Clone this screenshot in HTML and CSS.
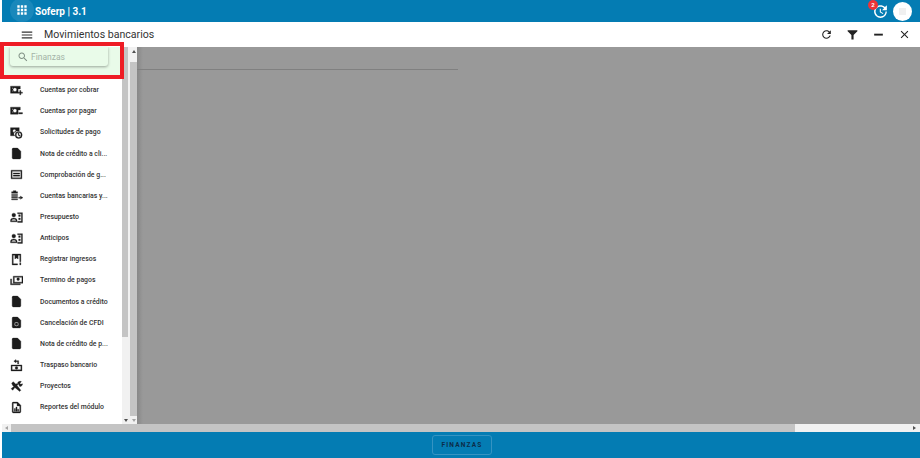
FILE: index.html
```html
<!DOCTYPE html>
<html lang="es">
<head>
    <meta charset="UTF-8">
    <meta name="viewport" content="width=device-width, initial-scale=1.0">
    <title>Soferp | 3.1</title>
    <link rel="stylesheet" href="styles.css">
</head>
<body>

<svg class="sprite" width="0" height="0">
    <symbol id="i-doc" viewBox="0 0 24 24"><path d="M6 2h8l6 6v12c0 1.100-.9 2-2 2H6c-1.100 0-2-.9-2-2V4c0-1.100.9-2 2-2z"/></symbol>
    <symbol id="i-cobrar" viewBox="0 0 24 24"><path fill-rule="evenodd" d="M1 4h18v5h-4v8H1zM9 7a3.500 3.500 0 1 0 0 7 3.500 3.500 0 0 0 0-7zM4 7v2h1.500V7zM4 12v2h1.500v-2z"/><path d="M18 12h2v3h3v2h-3v3h-2v-3h-3v-2h3z"/></symbol>
    <symbol id="i-pagar" viewBox="0 0 24 24"><path fill-rule="evenodd" d="M1 4h18v5h-4v8H1zM9 7a3.500 3.500 0 1 0 0 7 3.500 3.500 0 0 0 0-7zM4 7v2h1.500V7zM4 12v2h1.500v-2z"/><path d="M16 14h7v2.500h-7z"/></symbol>
    <symbol id="i-solicitud" viewBox="0 0 24 24"><path fill-rule="evenodd" d="M1 3h16v6h-5a5 5 0 0 0-3 9H1zM8 6a3 3 0 1 0 0 6 3 3 0 0 0 0-6z"/><path fill-rule="evenodd" d="M16 10a6.500 6.500 0 1 1 0 13 6.500 6.500 0 0 1 0-13zm0 2a4.500 4.500 0 1 0 0 9 4.500 4.500 0 0 0 0-9zm-1 1h1.500v3l2.500 1.500-.8 1.200L15 17z"/></symbol>
    <symbol id="i-comprobacion" viewBox="0 0 24 24"><path fill-rule="evenodd" d="M2 4h20v16H2zm2 2v12h16V6zM6 9h12v2H6zM6 13h12v2H6z"/></symbol>
    <symbol id="i-bancos" viewBox="0 0 24 24"><path d="M6 3h5v2h3v3H3V5h3zM3 10h11v2H3zM3 14h11v2H3zM3 18h11v2H3zM16 15h4l-1-2 5 3-5 3 1-2h-4z"/></symbol>
    <symbol id="i-personas" viewBox="0 0 24 24"><path fill-rule="evenodd" d="M7 4a3.500 3.500 0 1 1 0 7 3.500 3.500 0 0 1 0-7zM1 20v-3c0-2.500 3-4 6-4s6 1.500 6 4v3zm2-2h8v-1c0-1-2-2-4-2s-4 1-4 2zM14 3h9v18h-9v-2h7V5h-7z"/><path d="M16 7h3v3h-3zM16 13h3v3h-3z"/></symbol>
    <symbol id="i-ingresos" viewBox="0 0 24 24"><path fill-rule="evenodd" d="M4 2h16v14h-2V4h-3v7l-3-2-3 2V4H6v16h8v2H4zM18 18h2v4h-2z"/></symbol>
    <symbol id="i-termino" viewBox="0 0 24 24"><path fill-rule="evenodd" d="M6 4h18v13H6zm2 2v9h14V6zm7 1a2.500 2.500 0 1 1 0 5 2.500 2.500 0 0 1 0-5zM1 9h2v9h16v2H1z"/></symbol>
    <symbol id="i-cancelar" viewBox="0 0 24 24"><path fill-rule="evenodd" d="M6 2h8l6 6v12c0 1.100-.9 2-2 2H6c-1.100 0-2-.9-2-2V4c0-1.100.9-2 2-2zm6 9a4 4 0 1 0 0 8 4 4 0 0 0 0-8zm0 1.500a2.500 2.500 0 1 1 0 5 2.500 2.500 0 0 1 0-5z"/></symbol>
    <symbol id="i-traspaso" viewBox="0 0 24 24"><path fill-rule="evenodd" d="M2 11h20v11H2zm2 2v7h16v-7zm8 1a2.500 2.500 0 1 1 0 5 2.500 2.500 0 0 1 0-5z"/><path d="M11 1l-4 3 4 3V5h3v4h2V3h-5z"/></symbol>
    <symbol id="i-tools" viewBox="0 0 24 24"><path d="M3 6l3-3 5 5 2-2 2 2-2 2 7 9-2 2-9-7-4 5-3-3 5-4-2-2zM14 5c2-2.500 5-3 7-2l-3 3 2 2 3-1c.5 2.500-2 5.500-5 5z"/></symbol>
    <symbol id="i-reporte" viewBox="0 0 24 24"><path fill-rule="evenodd" d="M6 2h8l6 6v12c0 1.100-.9 2-2 2H6c-1.100 0-2-.9-2-2V4c0-1.100.9-2 2-2zm0 2v16h12V9h-5V4zM8 14h2v5H8zM11 11h2v8h-2zM14 15h2v4h-2z"/></symbol>
</svg>

<header class="topbar">
    <div class="topbar-left">
        <button class="apps-btn">
            <svg class="icon-apps" viewBox="0 0 24 24"><path d="M4 8h4V4H4v4zm6 12h4v-4h-4v4zm-6 0h4v-4H4v4zm0-6h4v-4H4v4zm6 0h4v-4h-4v4zm6-10v4h4V4h-4zm-6 4h4V4h-4v4zm6 6h4v-4h-4v4zm0 6h4v-4h-4v4z"/></svg>
        </button>
        <span class="brand">Soferp | 3.1</span>
    </div>
    <div class="topbar-right">
        <div class="history">
            <svg class="icon-history" viewBox="0 0 24 24"><path d="M21 10.120h-6.780l2.740-2.820c-2.730-2.700-7.150-2.800-9.880-.1-2.730 2.710-2.730 7.080 0 9.790s7.150 2.710 9.880 0C18.320 15.650 19 14.080 19 12.100h2c0 1.980-.88 4.550-2.640 6.290-3.510 3.480-9.210 3.480-12.720 0-3.500-3.470-3.530-9.110-.02-12.580s9.140-3.470 12.650 0L21 3v7.120zM12.500 8v4.250l3.500 2.080-.72 1.210L11 13V8h1.500z"/></svg>
            <span class="badge">2</span>
        </div>
        <div class="avatar"><span class="avatar-inner"></span></div>
    </div>
</header>

<div class="toolbar">
    <div class="toolbar-left">
        <svg class="icon-menu" viewBox="0 0 24 24"><path d="M3 18h18v-2H3v2zm0-5h18v-2H3v2zm0-7v2h18V6H3z"/></svg>
        <span class="page-title">Movimientos bancarios</span>
    </div>
    <div class="toolbar-actions">
        <svg class="tool" viewBox="0 0 24 24"><path d="M17.650 6.350C16.200 4.900 14.210 4 12 4c-4.420 0-7.990 3.580-7.990 8s3.570 8 7.990 8c3.730 0 6.840-2.550 7.730-6h-2.080c-.82 2.330-3.040 4-5.650 4-3.310 0-6-2.690-6-6s2.690-6 6-6c1.660 0 3.140.69 4.220 1.780L13 11h7V4l-2.350 2.350z"/></svg>
        <svg class="tool" viewBox="0 0 24 24"><path d="M3 4h18v2l-7 7v8h-4v-8L3 6z"/></svg>
        <svg class="tool" viewBox="0 0 24 24"><path d="M4 10.500h16v3.500H4z"/></svg>
        <svg class="tool" viewBox="0 0 24 24"><path d="M19 6.410 17.590 5 12 10.590 6.410 5 5 6.410 10.590 12 5 17.590 6.410 19 12 13.410 17.590 19 19 17.590 13.410 12z"/></svg>
    </div>
</div>

<div class="workspace">
    <aside class="sidebar">
        <div class="search-area">
            <div class="search-box">
                <svg class="icon-search" viewBox="0 0 24 24"><path d="M15.500 14h-.79l-.28-.27C15.410 12.590 16 11.110 16 9.500 16 5.910 13.090 3 9.500 3S3 5.910 3 9.500 5.910 16 9.500 16c1.610 0 3.090-.59 4.230-1.570l.27.28v.79l5 4.990L20.490 19l-4.990-5zm-6 0C7.010 14 5 11.990 5 9.500S7.010 5 9.500 5 14 7.010 14 9.500 11.990 14 9.500 14z"/></svg>
                <span class="search-text">Finanzas</span>
            </div>
        </div>
        <ul class="menu">
            <li><svg class="menu-icon"><use href="#i-cobrar"/></svg><span>Cuentas por cobrar</span></li>
            <li><svg class="menu-icon"><use href="#i-pagar"/></svg><span>Cuentas por pagar</span></li>
            <li><svg class="menu-icon"><use href="#i-solicitud"/></svg><span>Solicitudes de pago</span></li>
            <li><svg class="menu-icon"><use href="#i-doc"/></svg><span>Nota de crédito a cli...</span></li>
            <li><svg class="menu-icon"><use href="#i-comprobacion"/></svg><span>Comprobación de g...</span></li>
            <li><svg class="menu-icon"><use href="#i-bancos"/></svg><span>Cuentas bancarias y...</span></li>
            <li><svg class="menu-icon"><use href="#i-personas"/></svg><span>Presupuesto</span></li>
            <li><svg class="menu-icon"><use href="#i-personas"/></svg><span>Anticipos</span></li>
            <li><svg class="menu-icon"><use href="#i-ingresos"/></svg><span>Registrar ingresos</span></li>
            <li><svg class="menu-icon"><use href="#i-termino"/></svg><span>Termino de pagos</span></li>
            <li><svg class="menu-icon"><use href="#i-doc"/></svg><span>Documentos a crédito</span></li>
            <li><svg class="menu-icon"><use href="#i-cancelar"/></svg><span>Cancelación de CFDI</span></li>
            <li><svg class="menu-icon"><use href="#i-doc"/></svg><span>Nota de crédito de p...</span></li>
            <li><svg class="menu-icon"><use href="#i-traspaso"/></svg><span>Traspaso bancario</span></li>
            <li><svg class="menu-icon"><use href="#i-tools"/></svg><span>Proyectos</span></li>
            <li><svg class="menu-icon"><use href="#i-reporte"/></svg><span>Reportes del módulo</span></li>
        </ul>
    </aside>

    <div class="vscroll vscroll-inner">
        <div class="vthumb vthumb-inner"></div>
        <div class="vscroll-end"><i class="arrow-down"></i></div>
    </div>
    <div class="vscroll vscroll-outer">
        <div class="vscroll-top"><i class="arrow-up"></i></div>
        <div class="vthumb vthumb-outer"></div>
        <div class="vscroll-end"><i class="arrow-down light"></i></div>
    </div>

    <main class="content">
        <div class="content-line"></div>
    </main>
</div>

<div class="hscroll">
    <i class="arrow-left"></i>
    <div class="hthumb"></div>
    <i class="arrow-right"></i>
</div>

<footer class="bottombar">
    <button class="module-btn">FINANZAS</button>
</footer>

<div class="highlight"></div>

</body>
</html>
```

FILE: styles.css
```css
* {
    box-sizing: border-box;
}
html, body {
    height: 100%;
}
body {
    margin: 0;
    padding-left: 2px;
    width: 920px;
    height: 458px;
    overflow: hidden;
    display: flex;
    flex-direction: column;
    background-color: #ffffff;
    font-family: 'Roboto', 'Liberation Sans', sans-serif;
    color: #222222;
}
.sprite {
    position: absolute;
}

/* barra superior */
.topbar {
    height: 22px;
    flex: none;
    display: flex;
    align-items: center;
    justify-content: space-between;
    background-color: #047cb3;
    color: #ffffff;
}
.topbar-left {
    display: flex;
    align-items: center;
}
.apps-btn {
    width: 24px;
    height: 24px;
    margin: -2px 0 0 8px;
    padding: 0;
    border: none;
    border-radius: 50%;
    background-color: #1a88bb;
    display: flex;
    align-items: center;
    justify-content: center;
}
.icon-apps {
    width: 14px;
    height: 14px;
    fill: #ffffff;
}
.brand {
    margin-left: 1px;
    font-size: 10px;
    font-weight: 700;
}
.topbar-right {
    display: flex;
    align-items: center;
    gap: 4px;
    padding-right: 8px;
}
.history {
    position: relative;
    width: 17px;
    height: 17px;
}
.icon-history {
    width: 17px;
    height: 17px;
    fill: #ffffff;
}
.badge {
    position: absolute;
    top: -3px;
    left: -4px;
    width: 10px;
    height: 10px;
    border-radius: 50%;
    background-color: #ee3338;
    font-size: 6px;
    font-weight: 700;
    line-height: 10px;
    text-align: center;
}
.avatar {
    width: 19px;
    height: 19px;
    border-radius: 50%;
    background-color: #ffffff;
    display: flex;
    align-items: center;
    justify-content: center;
}
.avatar-inner {
    width: 7px;
    height: 7px;
    background-color: #f0f0f0;
}

/* barra de titulo */
.toolbar {
    height: 25px;
    flex: none;
    display: flex;
    align-items: center;
    justify-content: space-between;
    background-color: #ffffff;
}
.toolbar-left {
    display: flex;
    align-items: center;
}
.icon-menu {
    width: 14px;
    height: 14px;
    margin-left: 18px;
    fill: #333333;
}
.page-title {
    margin-left: 10px;
    font-size: 10.600px;
    color: #333333;
}
.toolbar-actions {
    display: flex;
    align-items: center;
    gap: 13px;
    padding-right: 9px;
}
.tool {
    width: 13px;
    height: 13px;
    fill: #222222;
}

/* area de trabajo */
.workspace {
    flex: 1;
    min-height: 0;
    display: flex;
    background-color: #999999;
}
.sidebar {
    width: 120px;
    flex: none;
    display: flex;
    flex-direction: column;
    background-color: #ffffff;
}
.search-area {
    height: 31px;
    flex: none;
    padding: 0 14px 0 8px;
    background-color: #e9fbe9;
}
.search-box {
    height: 19px;
    display: flex;
    align-items: center;
    background-color: #e9fbe9;
    border-radius: 0 0 3px 3px;
    box-shadow: 0 1px 3px rgba(0, 0, 0, 0.35);
}
.icon-search {
    width: 12px;
    height: 12px;
    margin-left: 7px;
    fill: #7f8f84;
}
.search-text {
    margin-left: 2px;
    font-size: 8.500px;
    color: #a3b3a7;
}
.menu {
    list-style: none;
    margin: 0;
    padding: 1.500px 0 0;
}
.menu li {
    height: 21.170px;
    display: flex;
    align-items: center;
    font-size: 6.900px;
    font-weight: 500;
    color: #333333;
}
.menu-icon {
    width: 13px;
    height: 13px;
    margin-left: 8px;
    margin-right: 17px;
    fill: #1c1c1c;
    stroke: #1c1c1c;
    stroke-width: 0.6;
}

/* barras de desplazamiento */
.vscroll {
    flex: none;
    display: flex;
    flex-direction: column;
    background-color: #f1f1f1;
}
.vscroll-inner {
    width: 8px;
}
.vscroll-outer {
    width: 7px;
}
.vthumb {
    background-color: #c4c4c4;
}
.vthumb-inner {
    width: 6px;
    height: 290px;
}
.vthumb-outer {
    flex: 1;
    margin-top: 7px;
}
.vscroll-top {
    height: 8px;
    display: flex;
    align-items: center;
    justify-content: center;
}
.vscroll-end {
    height: 8px;
    margin-top: auto;
    display: flex;
    align-items: center;
    justify-content: center;
}
.arrow-up, .arrow-down {
    width: 0;
    height: 0;
    border-left: 2px solid transparent;
    border-right: 2px solid transparent;
}
.arrow-up {
    border-bottom: 3px solid #505050;
}
.arrow-down {
    border-top: 3px solid #505050;
}
.arrow-down.light {
    border-top-color: #a3a3a3;
}
.content {
    flex: 1;
    background: linear-gradient(to right, #888888, #999999 6px);
}
.content-line {
    width: 321px;
    height: 1px;
    margin-top: 22px;
    background-color: #808080;
}
.hscroll {
    height: 8px;
    flex: none;
    display: flex;
    align-items: center;
    padding: 0 4px 0 3px;
    background-color: #f1f1f1;
}
.hthumb {
    width: 784px;
    height: 100%;
    margin-left: 3px;
    background-color: #c4c4c4;
}
.arrow-left, .arrow-right {
    width: 0;
    height: 0;
    border-top: 2px solid transparent;
    border-bottom: 2px solid transparent;
}
.arrow-left {
    border-right: 3px solid #a3a3a3;
}
.arrow-right {
    margin-left: auto;
    border-left: 3px solid #505050;
}

/* barra inferior */
.bottombar {
    height: 26px;
    flex: none;
    display: flex;
    align-items: center;
    justify-content: center;
    background-color: #047cb3;
}
.module-btn {
    width: 60px;
    height: 20px;
    margin-left: 2px;
    padding: 0;
    border: 1px solid #3593c2;
    border-radius: 3px;
    background: transparent;
    font-family: inherit;
    font-size: 6.500px;
    font-weight: 700;
    letter-spacing: 1.200px;
    color: #0c2c48;
}

/* recuadro rojo sobre el buscador */
.highlight {
    position: absolute;
    left: 0;
    top: 42px;
    width: 124px;
    height: 37px;
    border: 4px solid #ee1c25;
}
```
